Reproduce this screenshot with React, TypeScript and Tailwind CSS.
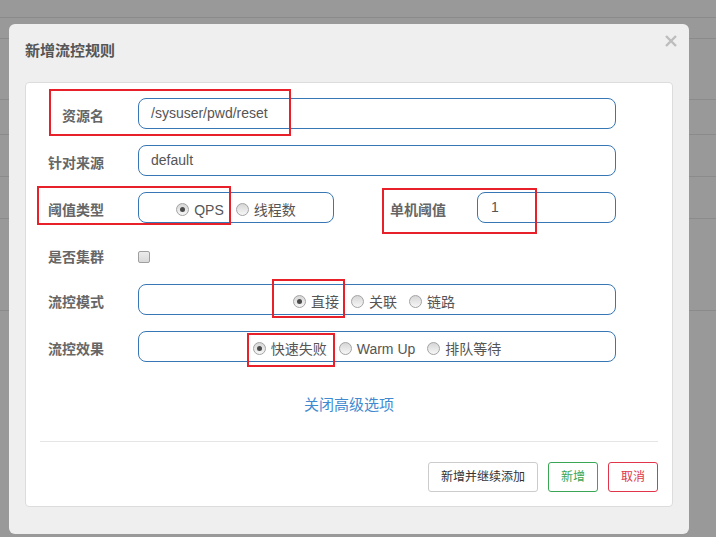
import React from 'react';

const bgRows = [18, 21, 61, 35, 42, 42, 92];

function Radio({ checked, label }: { checked?: boolean; label: string }) {
  return (
    <span className="flex items-center gap-[5px]">
      <span className="flex h-[13px] w-[13px] items-center justify-center rounded-full border border-[#a3a3a3] bg-linear-to-b from-[#d6d6d6] to-[#f7f7f7]">
        {checked && <span className="h-[5px] w-[5px] rounded-full bg-[#4a4a4a]" />}
      </span>
      <span className="mt-[2px] text-[14px] leading-[18px] text-[#555]">{label}</span>
    </span>
  );
}

function Label({ text, width = 'w-[78px]' }: { text: string; width?: string }) {
  return (
    <div className={`${width} h-[31px] shrink-0 text-right text-[14px] font-bold leading-[37px] text-[#666]`}>
      {text}
    </div>
  );
}

export default function App() {
  return (
    <div className="relative h-[537px] w-[716px] overflow-hidden bg-[#999] font-['Liberation_Sans','Noto_Sans_CJK_SC',sans-serif]">
      {/* page table behind the backdrop */}
      <div className="flex flex-col">
        {bgRows.map((h, i) => (
          <div key={i} className="border-b border-[#8b8b8b]" style={{ height: h }} />
        ))}
      </div>

      {/* modal */}
      <div className="absolute left-[9px] top-[24px] h-[510px] w-[680px] rounded-[6px] bg-[#efefef]">
        <button className="absolute right-[12px] top-[11px] p-0" title="close">
          <svg width="12" height="12" viewBox="0 0 12 12">
            <path d="M1 1L11 11M11 1L1 11" stroke="#bdbdbd" strokeWidth="2.4" />
          </svg>
        </button>

        <div className="px-[16px] pb-[21px] pt-[17px] text-[15px] font-bold leading-[20px] text-[#555]">
          新增流控规则
        </div>

        <div className="ml-[16px] flex h-[425px] w-[648px] flex-col rounded-[4px] border border-[#dcdcdc] bg-white">
          <div className="flex flex-col gap-[16px] pt-[15px]">
            <div className="flex h-[31px] items-start">
              <Label text="资源名" />
              <div className="ml-[34px] flex h-[31px] w-[478px] items-center rounded-[8px] border border-[#3777b6] px-[12px] text-[14px] text-[#555]">
                /sysuser/pwd/reset
              </div>
            </div>

            <div className="flex h-[31px] items-start">
              <Label text="针对来源" />
              <div className="ml-[34px] flex h-[31px] w-[478px] items-center rounded-[8px] border border-[#3777b6] px-[12px] text-[14px] text-[#555]">
                default
              </div>
            </div>

            <div className="flex h-[31px] items-start">
              <Label text="阈值类型" />
              <div className="ml-[34px] flex h-[31px] w-[196px] items-center justify-center gap-[12px] rounded-[8px] border border-[#3777b6] pt-[3px]">
                <Radio checked label="QPS" />
                <Radio label="线程数" />
              </div>
              <Label text="单机阈值" width="w-[112px]" />
              <div className="ml-[31px] flex h-[31px] w-[139px] items-center rounded-[8px] border border-[#3777b6] px-[13px] text-[14px] text-[#555]">
                1
              </div>
            </div>

            <div className="flex h-[29px] items-start">
              <div className="h-[29px] w-[78px] shrink-0 text-right text-[14px] font-bold leading-[37px] text-[#666]">
                是否集群
              </div>
              <div className="ml-[34px] mt-[12px] h-[12px] w-[12px] rounded-[2px] border border-[#9f9f9f] bg-linear-to-b from-[#ececec] to-[#d9d9d9]" />
            </div>

            <div className="flex h-[31px] items-start">
              <Label text="流控模式" />
              <div className="ml-[34px] flex h-[31px] w-[478px] items-center justify-center gap-[12px] rounded-[8px] border border-[#3777b6] pr-[6px] pt-[3px]">
                <Radio checked label="直接" />
                <Radio label="关联" />
                <Radio label="链路" />
              </div>
            </div>

            <div className="flex h-[31px] items-start">
              <Label text="流控效果" />
              <div className="ml-[34px] flex h-[31px] w-[478px] items-center justify-center gap-[12px] rounded-[8px] border border-[#3777b6] pt-[3px]">
                <Radio checked label="快速失败" />
                <Radio label="Warm Up" />
                <Radio label="排队等待" />
              </div>
            </div>
          </div>

          <div className="mt-[33px] text-center text-[15px] leading-[20px] text-[#3f8ad0]">关闭高级选项</div>

          <div className="mx-[14px] mt-[26px] h-px bg-[#e5e5e5]" />

          <div className="mt-[20px] flex justify-end gap-[10px] pr-[14px]">
            <button className="h-[30px] rounded-[3px] border border-[#cccccc] bg-white px-[12px] text-[12px] text-[#333]">
              新增并继续添加
            </button>
            <button className="h-[30px] rounded-[3px] border border-[#3aa655] bg-white px-[12px] text-[12px] text-[#3aa655]">
              新增
            </button>
            <button className="h-[30px] rounded-[3px] border border-[#e0354a] bg-white px-[12px] text-[12px] text-[#e0354a]">
              取消
            </button>
          </div>
        </div>
      </div>

      {/* red annotation boxes */}
      <div className="absolute left-[49px] top-[89px] h-[47px] w-[242px] border-2 border-[#e8202a]" />
      <div className="absolute left-[37px] top-[186px] h-[39px] w-[194px] border-2 border-[#e8202a]" />
      <div className="absolute left-[382px] top-[188px] h-[46px] w-[155px] border-2 border-[#e8202a]" />
      <div className="absolute left-[272px] top-[279px] h-[39px] w-[73px] border-2 border-[#e8202a]" />
      <div className="absolute left-[247px] top-[333px] h-[34px] w-[88px] border-2 border-[#e8202a]" />
    </div>
  );
}
